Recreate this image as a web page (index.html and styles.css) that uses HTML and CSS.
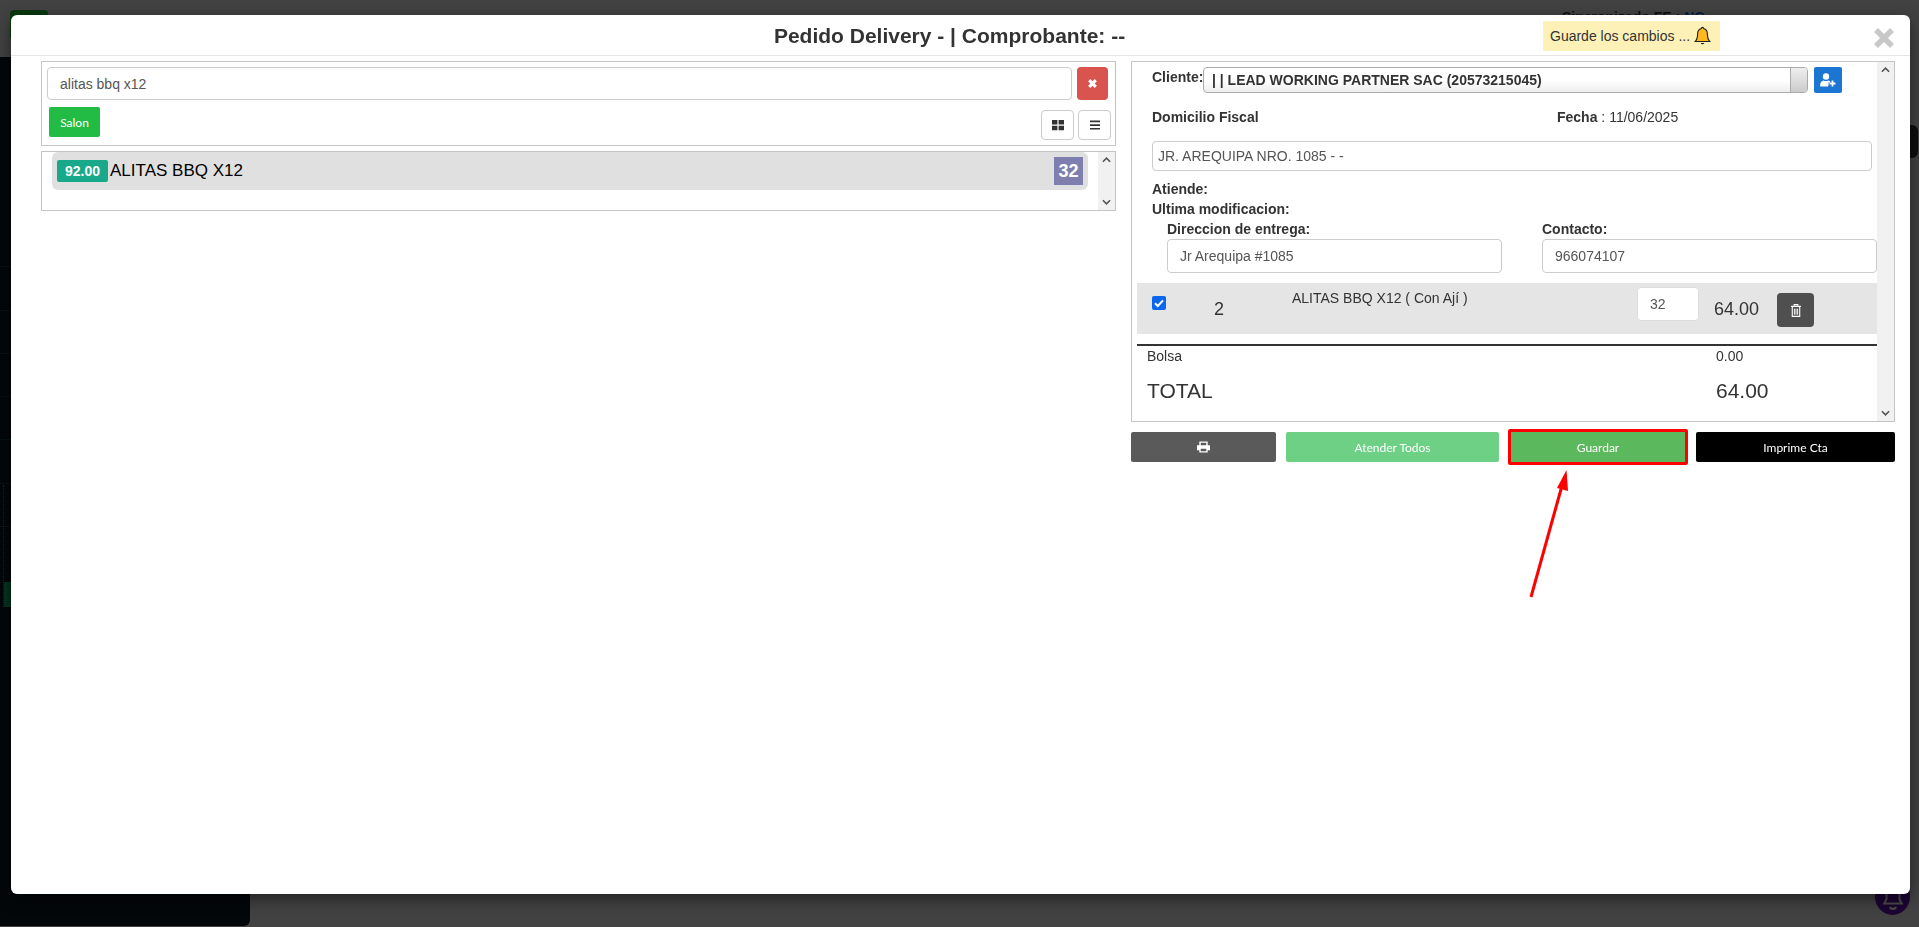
FILE: index.html
```html
<!DOCTYPE html>
<html lang="es">
<head>
<meta charset="utf-8">
<title>Pedido Delivery</title>
<link rel="stylesheet" href="styles.css">
</head>
<body>
<div class="backdrop">
  <div class="topbar">
    <span class="logo"></span>
    <span class="sync">Sincronizado <b>FE</b> : <b class="no">NO</b></span>
  </div>
  <aside class="sidebar">
    <span class="side-lines"></span>
    <span class="side-dots"></span>
    <span class="side-active"></span>
  </aside>
  <span class="side-pill"></span>
  <span class="fab"><svg viewBox="0 0 24 24" width="26" height="26"><path d="M12 3a6 6 0 0 0-6 6v5l-2 4h16l-2-4V9a6 6 0 0 0-6-6zM9.500 21a2.500 2 0 0 0 5 0" fill="none" stroke="#4a4a4a" stroke-width="2"/></svg></span>
</div>

<main class="modal">
  <header class="modal-head">
    <h1 class="modal-title">Pedido Delivery - | Comprobante: --</h1>
    <div class="notice">Guarde los cambios ...
      <svg class="bell" viewBox="0 0 16 18" width="19" height="20"><path d="M8 1.200c-.7 0-1 .5-1 1C4.800 2.800 3.600 4.600 3.600 7c0 3.600-.8 5.600-2.200 7h13.200c-1.400-1.400-2.200-3.400-2.200-7 0-2.400-1.200-4.200-3.400-4.800 0-.5-.3-1-1-1z" fill="#fbb81f" stroke="#222" stroke-width="1"/><path d="M6.300 15.200a1.800 1.800 0 0 0 3.400 0z" fill="#222"/></svg>
    </div>
    <svg class="close" viewBox="0 0 20 20" width="20" height="20"><path d="M2 2l16 16M18 2L2 18" stroke="#c8c8c8" stroke-width="5.500" fill="none"/></svg>
  </header>

  <div class="modal-body">
    <section class="left">
      <div class="box search-box">
        <div class="search-row">
          <div class="field search-input">alitas bbq x12</div>
          <button class="btn-clear"><svg viewBox="0 0 10 10" width="11" height="11"><path d="M2 2l6 6M8 2l-6 6" stroke="#fff" stroke-width="2.800" fill="none"/></svg></button>
        </div>
        <div class="tools-row">
          <button class="btn-salon">Salon</button>
          <div class="views">
            <button class="btn-view"><svg viewBox="0 0 12 12" width="12" height="12"><path d="M0 1h5.400v4.500H0zM6.600 1H12v4.500H6.600zM0 6.700h5.400v4.500H0zM6.600 6.700H12v4.500H6.600z" fill="#333"/></svg></button>
            <button class="btn-view"><svg viewBox="0 0 12 12" width="12" height="12"><path d="M1 1.500h10v1.700H1zM1 5.200h10v1.700H1zM1 8.900h10v1.700H1z" fill="#333"/></svg></button>
          </div>
        </div>
      </div>

      <div class="box list-box">
        <div class="list-rows">
          <div class="product">
            <span class="price">92.00</span>
            <span class="product-name">ALITAS BBQ X12</span>
            <span class="stock">32</span>
          </div>
        </div>
        <div class="scrollbar">
          <svg viewBox="0 0 10 6" width="9" height="6"><path d="M1 5l4-4 4 4" fill="none" stroke="#555" stroke-width="1.800"/></svg>
          <svg viewBox="0 0 10 6" width="9" height="6"><path d="M1 1l4 4 4-4" fill="none" stroke="#555" stroke-width="1.800"/></svg>
        </div>
      </div>
    </section>

    <section class="right">
      <div class="box order-box">
        <div class="order">
          <div class="client-row">
            <b class="client-label">Cliente:</b>
            <div class="select">
              <span class="select-text">| | LEAD WORKING PARTNER SAC (20573215045)</span>
              <span class="select-arrow"></span>
            </div>
            <button class="btn-add"><svg viewBox="0 0 16 14" width="16" height="14"><circle cx="6" cy="3.500" r="3.200" fill="#fff"/><path d="M0 13.500c0-4 1.500-6 3.500-6 1 .8 4 .8 5 0 .6 0 1.200.3 1.700.9v1.100H8.500v3h-.3l.1 1z" fill="#fff"/><path d="M9.500 10.500h6M12.500 7.500v6" stroke="#fff" stroke-width="1.800"/></svg></button>
          </div>
          <div class="fiscal-row">
            <b>Domicilio Fiscal</b>
            <span class="fecha"><b>Fecha</b> : 11/06/2025</span>
          </div>
          <div class="field fiscal-input">JR. AREQUIPA NRO. 1085 - -</div>
          <div class="meta"><b>Atiende:</b></div>
          <div class="meta"><b>Ultima modificacion:</b></div>
          <div class="delivery">
            <div class="delivery-col address">
              <b>Direccion de entrega:</b>
              <div class="field delivery-input">Jr Arequipa #1085</div>
            </div>
            <div class="delivery-col contact">
              <b>Contacto:</b>
              <div class="field delivery-input">966074107</div>
            </div>
          </div>
          <div class="item">
            <span class="check"><svg viewBox="0 0 14 14" width="14" height="14"><rect width="14" height="14" rx="2" fill="#0b66f0"/><path d="M3 7.300l2.800 2.700L11 4.300" fill="none" stroke="#fff" stroke-width="2"/></svg></span>
            <span class="qty">2</span>
            <span class="item-name">ALITAS BBQ X12 ( Con Ají )</span>
            <span class="code">32</span>
            <span class="item-total">64.00</span>
            <button class="btn-trash"><svg viewBox="0 0 12 14" width="12" height="13"><path d="M4 1.500V.7h4v.8M.7 2.500h10.600M2 3v10.300h8V3" fill="none" stroke="#fff" stroke-width="1.200"/><path d="M4.300 5v6.500M6 5v6.500M7.700 5v6.500" stroke="#fff" stroke-width="1"/></svg></button>
          </div>
          <div class="totals">
            <div class="bolsa"><span>Bolsa</span><span class="amount">0.00</span></div>
            <div class="total"><span>TOTAL</span><span class="amount">64.00</span></div>
          </div>
        </div>
        <div class="scrollbar">
          <svg viewBox="0 0 10 6" width="9" height="6"><path d="M1 5l4-4 4 4" fill="none" stroke="#555" stroke-width="1.800"/></svg>
          <svg viewBox="0 0 10 6" width="9" height="6"><path d="M1 1l4 4 4-4" fill="none" stroke="#555" stroke-width="1.800"/></svg>
        </div>
      </div>
      <div class="actions">
        <button class="action a-print"><svg viewBox="0 0 14 12" width="13" height="12"><path fill-rule="evenodd" d="M2.500 0h9v4H14v5.500h-2.500V12h-9V9.500H0V4h2.500zM4 1.300V4h6V1.300zM4 8v2.700h6V8z" fill="#fff"/></svg></button>
        <button class="action a-attend">Atender Todos</button>
        <button class="action a-save">Guardar</button>
        <button class="action a-account">Imprime Cta</button>
      </div>
    </section>
  </div>
  <svg class="arrow" viewBox="0 0 60 140" width="60" height="140"><path d="M12 135L44 20" stroke="#f00" stroke-width="3" fill="none"/><path d="M47.500 8L38 26l11 3z" fill="#f00"/></svg>
</main>
</body>
</html>
```
FILE: styles.css
```css
* { box-sizing: border-box; }
html, body { margin: 0; height: 100%; overflow: hidden; }
body { font-family: "Liberation Sans", Arial, sans-serif; font-size: 14px; color: #333; background: #424242; }
button { font: inherit; margin: 0; padding: 0; border: 0; display: flex; align-items: center; justify-content: center; }
b { font-weight: 700; }

.backdrop { position: fixed; inset: 0; background: #424242; overflow: hidden; }
.topbar { height: 57px; position: relative; }
.logo { position: absolute; left: 10px; top: 10px; width: 38px; height: 30px; border-radius: 4px; background: #08380f; }
.sync { position: absolute; left: 1562px; top: 9px; font-size: 14px; color: #111; font-weight: 700; white-space: nowrap; }
.no { color: #0a2040; }
.sidebar { position: absolute; left: 0; top: 57px; width: 250px; height: 869px; background: #03070a; border-radius: 0 0 6px 0; }
.side-lines { position: absolute; left: 0; top: 167px; width: 100%; height: 320px; background: repeating-linear-gradient(transparent 0, transparent 42.300px, #061219 42.300px, #061219 43.300px); }
.side-dots { position: absolute; left: 3px; top: 428px; height: 122px; border-left: 1px dotted #1c2226; }
.side-active { position: absolute; left: 4px; top: 525px; width: 7px; height: 25px; background: #06321f; }
.side-pill { position: absolute; left: 1905px; top: 125px; width: 13px; height: 33px; border-radius: 6px; background: #0e0e0e; }
.fab { position: absolute; left: 1875px; top: 878px; width: 35px; height: 37px; border-radius: 50%; background: #1c0433; display: flex; align-items: center; justify-content: center; }

.modal { position: absolute; left: 11px; top: 15px; width: 1899px; height: 879px; background: #fff; border-radius: 6px; box-shadow: 0 5px 15px rgba(0,0,0,.5); }
.modal-head { height: 41px; border-bottom: 1px solid #e5e5e5; position: relative; display: flex; justify-content: center; align-items: center; }
.modal-title { margin: 0; font-size: 21px; font-weight: 700; line-height: 26px; color: #333; position: relative; left: -11px; top: 1px; }
.notice { position: absolute; left: 1532px; top: 6px; width: 177px; height: 30px; background: #fdf1b8; display: flex; align-items: center; gap: 3px; padding-left: 7px; white-space: nowrap; font-size: 14px; }
.bell { flex: none; }
.close { position: absolute; left: 1863px; top: 13px; }

.modal-body { display: flex; padding: 5px 15px 0 30px; }
.left { width: 1075px; flex: none; }
.right { width: 764px; margin-left: 15px; flex: none; }
.box { border: 1px solid #c4c4c4; }
.field { border: 1px solid #ccc; border-radius: 4px; background: #fff; color: #555; display: flex; align-items: center; }

.search-box { height: 85px; padding: 5px 5px 0; }
.search-row { display: flex; gap: 5px; }
.search-input { width: 1025px; height: 33px; padding-left: 12px; }
.btn-clear { width: 31px; height: 33px; background: #d9534f; border-radius: 4px; }
.tools-row { display: flex; justify-content: space-between; margin-top: 7px; padding-left: 2px; padding-right: 0; }
.btn-salon { width: 51px; height: 30px; background: #22bb44; color: #fff; border-radius: 2px; font-family: Lato, sans-serif; font-size: 12px; }
.views { display: flex; gap: 4px; margin-top: 3px; margin-right: -1px; }
.btn-view { width: 33px; height: 30px; background: #fff; border: 1px solid #ccc; border-radius: 4px; }

.list-box { height: 60px; margin-top: 5px; display: flex; }
.list-rows { flex: 1; padding: 0 10px 0 10px; }
.product { height: 38px; background: #e0e0e0; display: flex; align-items: center; padding-left: 5px; padding-right: 5px; border-radius: 6px; }
.price { width: 51px; height: 22px; background: #17a98a; color: #fff; font-weight: 700; border-radius: 2px; display: flex; align-items: center; justify-content: center; font-size: 14px; }
.product-name { margin-left: 2px; font-size: 17px; color: #000; flex: 1; }
.stock { width: 29px; height: 28px; background: #7e7fae; color: #fff; font-weight: 700; font-size: 18px; display: flex; align-items: center; justify-content: center; }
.scrollbar { width: 17px; flex: none; background: #f1f1f1; display: flex; flex-direction: column; justify-content: space-between; align-items: center; padding: 5px 0; }

.order-box { height: 361px; display: flex; overflow: hidden; }
.order { flex: 1; min-width: 0; }
.client-row { display: flex; padding: 5px 0 0 20px; height: 32px; }
.client-label { width: 51px; padding-top: 2px; font-size: 14px; }
.select { width: 605px; height: 26px; margin-right: 6px; border: 1px solid #aaa; border-radius: 4px; background: linear-gradient(#fff 50%, #eee); display: flex; justify-content: space-between; font-weight: 700; font-size: 14px; }
.select-text { padding: 4px 0 0 8px; }
.select-arrow { width: 17px; border-left: 1px solid #aaa; background: linear-gradient(#eee, #ccc); border-radius: 0 3px 3px 0; }
.btn-add { width: 28px; height: 26px; background: #1a76d2; border-radius: 2px; }
.fiscal-row { display: flex; padding: 15px 0 0 20px; height: 47px; font-size: 14px; }
.fiscal-row > b { width: 405px; }
.fecha { font-size: 14px; }
.fiscal-input { width: 720px; height: 30px; margin-left: 20px; padding-left: 5px; }
.meta { padding-left: 20px; height: 20px; line-height: 20px; font-size: 14px; }
.fiscal-input + .meta { margin-top: 8px; }
.delivery { display: flex; padding-left: 35px; }
.delivery-col b { display: block; height: 20px; line-height: 20px; }
.address { width: 375px; }
.contact { width: 335px; }
.delivery-input { height: 34px; padding-left: 12px; }
.address .delivery-input { width: 335px; }
.contact .delivery-input { width: 335px; }
.item { margin: 10px 0 0 5px; height: 51px; background: #e5e5e5; display: flex; position: relative; }
.check { margin: 13px 0 0 15px; width: 14px; height: 14px; line-height: 0; }
.qty { margin: 16px 0 0 48px; width: 30px; font-size: 18px; }
.item-name { margin: 7px 0 0 48px; width: 345px; font-size: 14px; }
.code { margin-top: 4px; width: 62px; height: 34px; background: #fff; border: 1px solid #ddd; border-radius: 4px; padding: 8px 0 0 12px; color: #555; }
.item-total { margin: 16px 0 0 15px; width: 63px; font-size: 18px; }
.btn-trash { margin-top: 10px; width: 37px; height: 34px; background: #4f4f4f; border-radius: 4px; }
.totals { margin: 10px 0 0 5px; border-top: 2px solid #333; padding-left: 10px; }
.totals div { display: flex; }
.totals span:first-child { width: 569px; }
.bolsa { height: 16px; margin-top: 2px; font-size: 14px; line-height: 16px; }
.total { margin-top: 14px; font-size: 21px; line-height: 26px; }

.actions { display: flex; margin-top: 7px; gap: 9px; align-items: center; }
.action { height: 30px; border-radius: 2px; color: #fff; font-family: Lato, sans-serif; font-size: 12px; }
.a-print { width: 145px; background: #5a5a5a; margin-right: 1px; }
.a-attend { width: 213px; background: #6ed085; }
.a-save { width: 180px; height: 36px; background: #5cb85c; border: 3px solid #f00; margin: 0; }
.a-account { width: 199px; background: #000; margin-left: -1px; }

.arrow { position: absolute; left: 1508px; top: 447px; }
```
